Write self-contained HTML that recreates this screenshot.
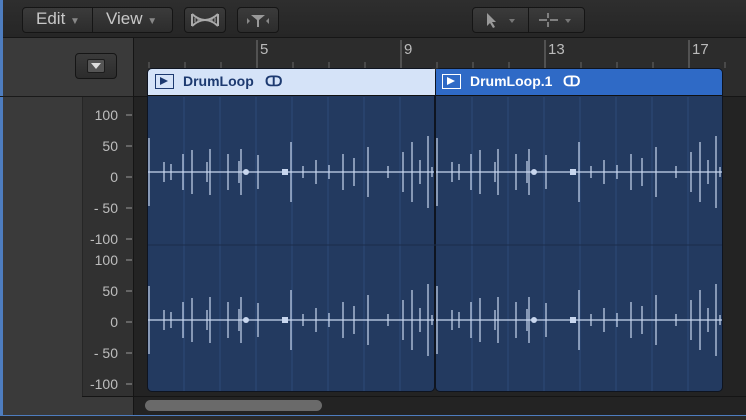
<!DOCTYPE html>
<html><head><style>
body{margin:0;width:746px;height:420px;overflow:hidden;background:#2a2a2a;font-family:"Liberation Sans",sans-serif;position:relative}
div{position:absolute;box-sizing:border-box}
.btn{border:1px solid #151515;border-radius:4px;background:linear-gradient(#3b3b3b,#2c2c2c);color:#c8c8c8;font-size:16px}
.lab{color:#bdbdbd;font-size:14px;right:0;text-align:right;width:50px}
</style></head><body>
<div style="left:0;top:0;width:746px;height:38px;background:linear-gradient(#2e2e2e,#262626);border-bottom:1px solid #161616"></div>
<div class="btn" style="left:22px;top:7px;width:151px;height:26px"></div>
<div style="left:92px;top:8px;width:1px;height:24px;background:#151515"></div>
<div style="left:36px;top:9px;color:#c8c8c8;font-size:17px">Edit <span style="font-size:10px;color:#888">▼</span></div>
<div style="left:106px;top:9px;color:#c8c8c8;font-size:17px">View <span style="font-size:10px;color:#888">▼</span></div>
<div class="btn" style="left:184px;top:7px;width:42px;height:26px"></div>
<svg style="position:absolute;left:190px;top:12px" width="30" height="16"><path d="M2 2 Q15 14 28 2 M2 14 Q15 2 28 14 M2 2V14 M28 2V14" stroke="#aaa" stroke-width="2" fill="none"/><path d="M5 6V10M8 5V11M22 5V11M25 6V10" stroke="#aaa"/></svg>
<div class="btn" style="left:237px;top:7px;width:42px;height:26px"></div>
<svg style="position:absolute;left:244px;top:12px" width="28" height="16"><path d="M7 3H21L15 8V15H13V8Z" fill="#999"/><path d="M3 6L6 9L3 12ZM25 6L22 9L25 12Z" fill="#888"/></svg>
<div class="btn" style="left:472px;top:7px;width:113px;height:26px"></div>
<div style="left:528px;top:8px;width:1px;height:24px;background:#151515"></div>
<svg style="position:absolute;left:483px;top:11px" width="40" height="18"><path d="M4 2V15L7 12L10 17L12 16L9 11H13Z" fill="#999"/><path d="M26 8L29 12L32 8Z" fill="#777"/></svg>
<svg style="position:absolute;left:536px;top:11px" width="44" height="18"><path d="M3 9H11M14 9H22M12 2V7M12 11V16" stroke="#999" stroke-width="1.5"/><path d="M29 8L32 12L35 8Z" fill="#777"/></svg>

<div style="left:0;top:38px;width:133px;height:382px;background:#3a3a3a"></div>
<div style="left:0;top:0;width:3px;height:420px;background:#4e7dbf"></div>
<div style="left:0;top:96px;width:133px;height:1px;background:#1a1a1a"></div>
<div style="left:82px;top:97px;width:51px;height:300px;background:#313131;border-left:1px solid #262626"></div>
<div class="btn" style="left:75px;top:53px;width:42px;height:26px"></div>
<div style="left:87px;top:59px;width:18px;height:14px;background:#555;border:1px solid #1c1c1c;border-radius:2px"></div>
<svg style="position:absolute;left:89px;top:61px" width="14" height="10"><path d="M2 2H12L7 8Z" fill="#ddd"/></svg>
<div style="left:133px;top:38px;width:613px;height:382px;background:#232323;border-left:1px solid #151515"></div>
<div style="left:134px;top:38px;width:612px;height:59px;background:#2c2c2c;border-bottom:1px solid #151515"></div>
<svg style="position:absolute;left:134px;top:38px" width="612" height="59" font-family="Liberation Sans" font-size="15" fill="#bbb">
<g stroke="#777"><line x1="123" y1="2" x2="123" y2="58"/><line x1="267" y1="2" x2="267" y2="58"/><line x1="411" y1="2" x2="411" y2="58"/><line x1="555" y1="2" x2="555" y2="58"/></g>
<text x="126" y="16">5</text><text x="270" y="16">9</text><text x="414" y="16">13</text><text x="558" y="16">17</text>
<g stroke="#666"><path d="M15 24V30M51 24V30M87 24V30M159 24V30M195 24V30M231 24V30M303 24V30M339 24V30M375 24V30M447 24V30M483 24V30M519 24V30M591 24V30"/></g>
</svg>
<div style="left:147px;top:68px;width:288px;height:324px;background:#233a60;border:1px solid #0e1420;border-radius:5px"></div>
<div style="left:435px;top:68px;width:288px;height:324px;background:#233a60;border:1px solid #0e1420;border-radius:5px"></div>
<div style="left:148px;top:69px;width:287px;height:27px;background:#d5e3f8;border-radius:4px 0 0 0;border-bottom:1px solid #111"></div>
<div style="left:436px;top:69px;width:286px;height:27px;background:#2f6ac6;border-radius:0 4px 0 0;border-bottom:1px solid #111"></div>
<div style="left:155px;top:74px;width:19px;height:15px;border:1.5px solid #1d3a70"></div>
<div style="left:160px;top:77px;width:0;height:0;border-left:8px solid #1d3a70;border-top:4.5px solid transparent;border-bottom:4.5px solid transparent"></div>
<div style="left:183px;top:73px;color:#1d3a70;font-weight:bold;font-size:14px">DrumLoop</div>
<div style="left:265px;top:73px;color:#1d3a70;font-size:14px;font-weight:bold">ↀ</div>
<div style="left:442px;top:74px;width:19px;height:15px;border:1.5px solid #fff"></div>
<div style="left:447px;top:77px;width:0;height:0;border-left:8px solid #fff;border-top:4.5px solid transparent;border-bottom:4.5px solid transparent"></div>
<div style="left:470px;top:73px;color:#fff;font-weight:bold;font-size:14px">DrumLoop.1</div>
<div style="left:563px;top:73px;color:#fff;font-size:14px;font-weight:bold">ↀ</div>
<svg style="position:absolute;left:0;top:0" width="746" height="420">
<defs><g id="w" stroke="#c8d6ee" stroke-width="1.2">
<line x1="0" y1="0" x2="286" y2="0" stroke-width="1.2"/>
<path d="M1 -34V34M16 -10V10M23 -8V8M35 -18V18M44 -22V22M59 -10V10M62 -23V23M80 -18V18M91 -11V11M93 -23V23M110 -17V17M143 -30V30M155 -6V6M168 -12V12M181 -7V7M195 -18V18M206 -14V14M220 -25V25M240 -6V6M255 -20V20M264 -30V30M272 -12V12M280 -36V36M284 -5V5"/>
<circle cx="98" cy="0" r="3" fill="#c8d6ee" stroke="none"/><rect x="134" y="-3" width="6" height="6" fill="#c8d6ee" stroke="none"/>
</g></defs>
<g stroke="#2e4a78"><path d="M184 97V391M220 97V391M256 97V391M292 97V391M328 97V391M364 97V391M400 97V391M472 97V391M508 97V391M544 97V391M580 97V391M616 97V391M652 97V391M688 97V391"/></g>
<line x1="148" y1="245" x2="722" y2="245" stroke="#1b2c4a"/>
<use href="#w" x="148" y="172"/><use href="#w" x="436" y="172"/>
<use href="#w" x="148" y="320"/><use href="#w" x="436" y="320"/>
<g stroke="#999"><path d="M126 115H132M126 146H132M126 177H132M126 208H132M126 239H132M126 260H132M126 291H132M126 322H132M126 353H132M126 384H132"/></g>
</svg>
<div class="lab" style="left:68px;top:107px">100</div>
<div class="lab" style="left:68px;top:138px">50</div>
<div class="lab" style="left:68px;top:169px">0</div>
<div class="lab" style="left:68px;top:200px">- 50</div>
<div class="lab" style="left:68px;top:231px">-100</div>
<div class="lab" style="left:68px;top:252px">100</div>
<div class="lab" style="left:68px;top:283px">50</div>
<div class="lab" style="left:68px;top:314px">0</div>
<div class="lab" style="left:68px;top:345px">- 50</div>
<div class="lab" style="left:68px;top:376px">-100</div>
<div style="left:82px;top:396px;width:664px;height:1px;background:#151515"></div>
<div style="left:145px;top:400px;width:177px;height:11px;background:#6a6a6a;border-radius:6px"></div>
<div style="left:0;top:415px;width:746px;height:5px;background:#2a2a2a;border-top:1px solid #4e7dbf"></div>
</body></html>
